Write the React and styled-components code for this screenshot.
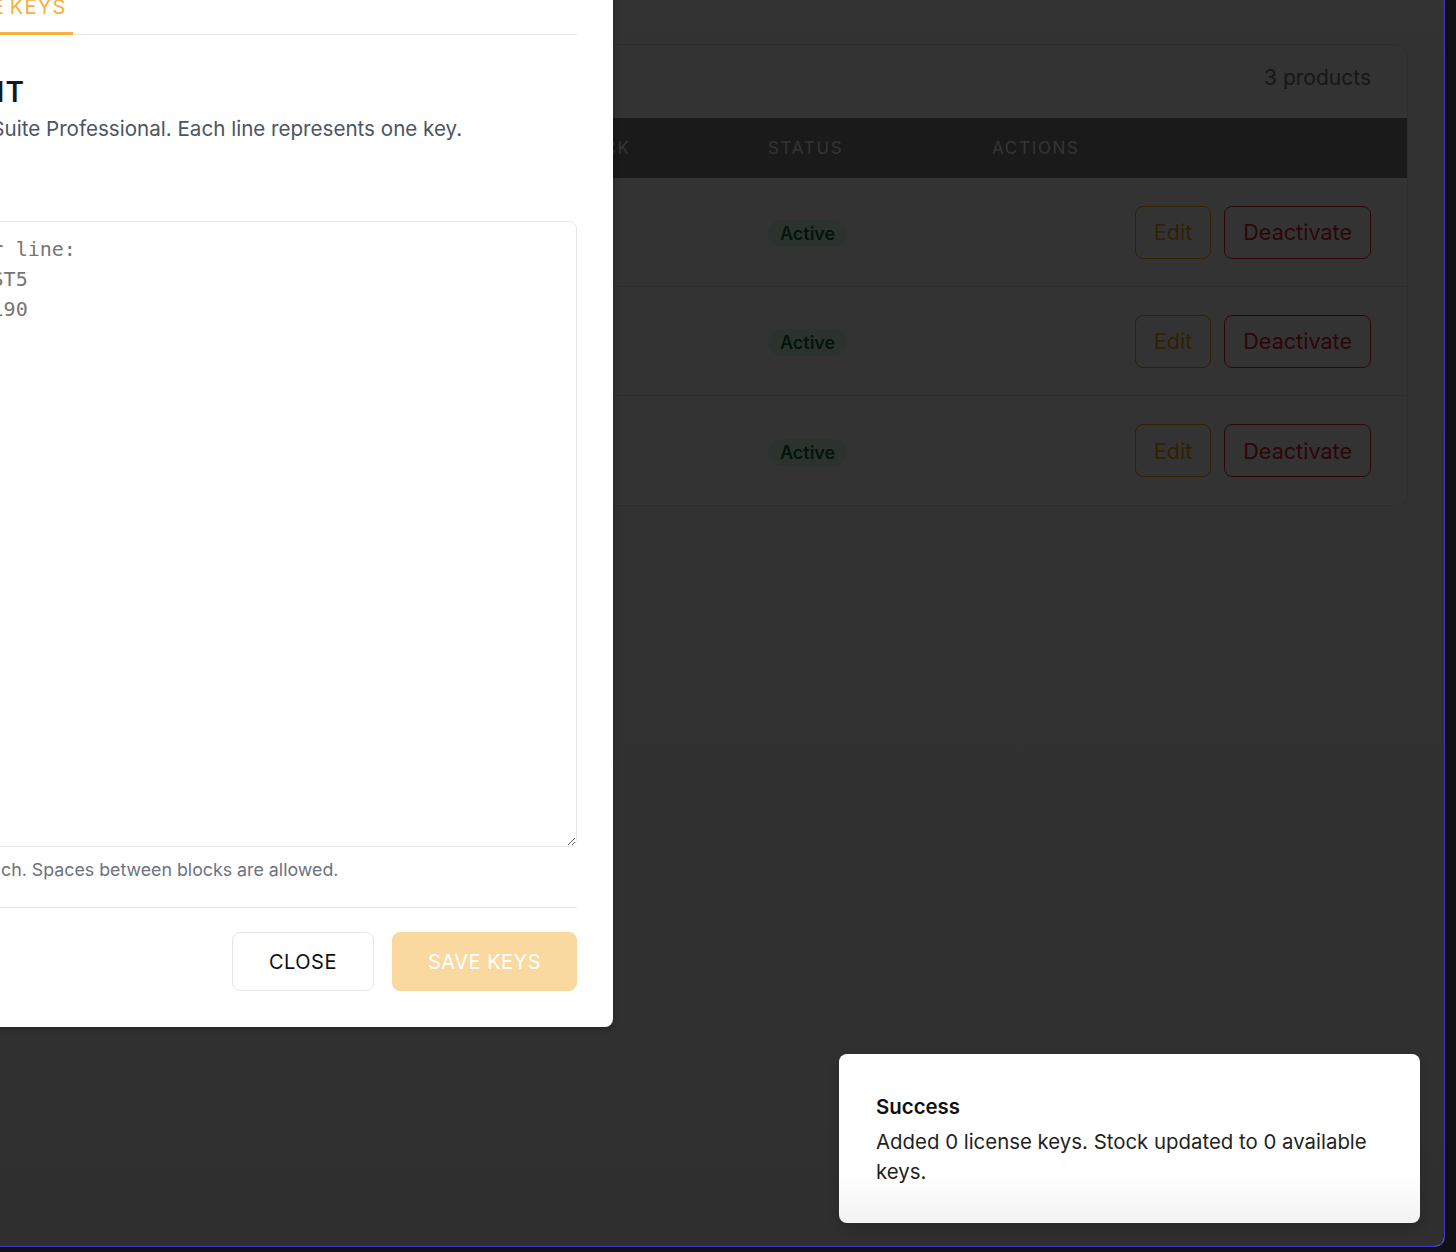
import React from 'react'
import styled, { createGlobalStyle } from 'styled-components'

const GlobalStyle = createGlobalStyle`
    html, body {
        margin: 0;
        padding: 0;
        background: #0f1014;
    }
    body {
        font-family: Inter, "Noto Sans", sans-serif;
        color: #111827;
    }
    * {
        box-sizing: border-box;
    }
`

const Window = styled.div`
    position: relative;
    width: 1445px;
    height: 1247px;
    border-right: 1px solid #4338ca;
    border-bottom: 1px solid #4338ca;
    border-bottom-right-radius: 10px;
    overflow: hidden;
    background: linear-gradient(180deg, #fcfcfc 0%, #ebebeb 100%);
`

const Page = styled.main`
    padding: 44px 36px 0 36px;
`

const Card = styled.section`
    background: #ffffff;
    border: 1px solid #e5e7eb;
    border-radius: 12px;
    overflow: hidden;
`

const CardHeader = styled.div`
    display: flex;
    justify-content: space-between;
    align-items: center;
    padding: 19px 36px 26px;
    line-height: 28px;
`

const CardTitle = styled.h2`
    margin: 0;
    font-size: 24px;
    font-weight: 600;
`

const Count = styled.span`
    font-size: 21px;
    color: #6b7280;
`

const Row = styled.div`
    display: grid;
    grid-template-columns: 291px 200px 204px 224px 1fr;
    align-items: center;
    height: ${p => p.$head ? '60px' : '109px'};
    background: ${p => p.$head ? '#808080' : 'transparent'};
    border-bottom: ${p => p.$last || p.$head ? 'none' : '1px solid #e5e7eb'};
`

const HeadCell = styled.div`
    padding: 0 36px;
    font-size: 17px;
    letter-spacing: 1.7px;
    text-transform: uppercase;
    color: #ffffff;
`

const Cell = styled.div`
    padding: 0 36px;
    font-size: 18px;
    display: flex;
    justify-content: ${p => p.$end ? 'flex-end' : 'flex-start'};
    gap: 13px;
`

const Badge = styled.span`
    display: inline-flex;
    align-items: center;
    height: 27px;
    margin-top: 3px;
    padding: 0 12px;
    border-radius: 14px;
    background: #dcfce7;
    color: #166534;
    font-size: 18px;
    font-weight: 600;
`

const RowButton = styled.button`
    height: 53px;
    padding: 0 18px;
    border-radius: 8px;
    background: transparent;
    font-family: inherit;
    font-size: 21.6px;
    border: 1px solid ${p => p.$danger ? '#dc2626' : '#f59e0b'};
    color: ${p => p.$danger ? '#dc2626' : '#f59e0b'};
`

const Backdrop = styled.div`
    position: absolute;
    inset: 0;
    background: rgba(0, 0, 0, 0.8);
`

const Modal = styled.div`
    position: absolute;
    left: -230px;
    top: -38px;
    width: 843px;
    padding: 24px 36px 36px;
    background: #ffffff;
    border-radius: 8px;
    box-shadow: 0 2px 6px rgba(0, 0, 0, 0.25);
`

const Tabs = styled.div`
    display: flex;
    border-bottom: 1px solid #e5e7eb;
`

const Tab = styled.div`
    position: relative;
    height: 48px;
    padding: 0 6px 6px;
    display: flex;
    align-items: center;
    font-size: 20px;
    letter-spacing: 1.2px;
    word-spacing: -2px;
    text-transform: uppercase;
    color: ${p => p.$active ? '#f5b041' : '#6b7280'};

    &::after {
        content: '';
        display: ${p => p.$active ? 'block' : 'none'};
        position: absolute;
        left: 0;
        right: 0;
        bottom: -1px;
        height: 3px;
        background: #f5b041;
    }
`

const Heading = styled.h3`
    margin: 39px 0 0;
    font-size: 28px;
    line-height: 36px;
    font-weight: 600;
    letter-spacing: 1.2px;
    text-transform: uppercase;
    color: #111827;
`

const Description = styled.p`
    margin: 4px 0 0;
    font-size: 20.6px;
    line-height: 30px;
    color: #4b5563;
`

const KeysInput = styled.textarea`
    display: block;
    width: 100%;
    height: 626px;
    margin-top: 77px;
    padding: 12px 16px;
    border: 1px solid #e5e7eb;
    border-radius: 8px;
    font-family: "DejaVu Sans Mono", "Liberation Mono", monospace;
    font-size: 20px;
    line-height: 30px;
    color: #1f2937;
    outline: none;

    &::placeholder {
        color: #757575;
    }
`

const Hint = styled.p`
    margin: 11px 0 0;
    padding-bottom: 25px;
    font-size: 17.8px;
    line-height: 24px;
    color: #6b7280;
    border-bottom: 1px solid #e5e7eb;
`

const Footer = styled.div`
    display: flex;
    justify-content: flex-end;
    gap: 18px;
    padding-top: 24px;
`

const Button = styled.button`
    height: 59px;
    padding: 0 ${p => p.$primary ? '35px' : '36px'};
    border-radius: 8px;
    font-family: inherit;
    font-size: 20px;
    letter-spacing: 0.5px;
    text-transform: uppercase;
    border: 1px solid ${p => p.$primary ? '#f9d9a0' : '#e5e7eb'};
    background: ${p => p.$primary ? '#f9d9a0' : '#ffffff'};
    color: ${p => p.$primary ? '#ffffff' : '#111111'};
`

const Toast = styled.div`
    position: absolute;
    right: 24px;
    bottom: 23px;
    width: 581px;
    padding: 38px 37px 36px;
    border-radius: 8px;
    background: linear-gradient(180deg, #ffffff 70%, #f3f3f3 100%);
    box-shadow: 0 4px 12px rgba(0, 0, 0, 0.15);
`

const ToastTitle = styled.div`
    font-size: 20.4px;
    line-height: 30px;
    font-weight: 600;
    color: #111111;
`

const ToastText = styled.div`
    margin-top: 5px;
    font-size: 20.4px;
    line-height: 30px;
    color: #1f1f1f;
`

const products = [
    { name: 'Office Suite Professional', price: '$249.00', stock: 0 },
    { name: 'Antivirus Premium', price: '$59.00', stock: 12 },
    { name: 'Design Studio Pro', price: '$399.00', stock: 4 },
]

const placeholder = 'Add one key per line:\nABCDE-12345-FGST5\n12345-ABCDE-67190'

export default function App() {
    return (
        <Window>
            <GlobalStyle />
            <Page>
                <Card>
                    <CardHeader>
                        <CardTitle>Products</CardTitle>
                        <Count>3 products</Count>
                    </CardHeader>
                    <Row $head>
                        <HeadCell>Product</HeadCell>
                        <HeadCell>Price</HeadCell>
                        <HeadCell>Stock</HeadCell>
                        <HeadCell>Status</HeadCell>
                        <HeadCell>Actions</HeadCell>
                    </Row>
                    {products.map((p, idx) => (
                        <Row key={p.name} $last={idx === products.length - 1}>
                            <Cell>{p.name}</Cell>
                            <Cell>{p.price}</Cell>
                            <Cell>{p.stock}</Cell>
                            <Cell><Badge>Active</Badge></Cell>
                            <Cell $end>
                                <RowButton>Edit</RowButton>
                                <RowButton $danger>Deactivate</RowButton>
                            </Cell>
                        </Row>
                    ))}
                </Card>
            </Page>

            <Backdrop />

            <Modal>
                <Tabs>
                    <Tab>Details</Tab>
                    <Tab $active>License Keys</Tab>
                </Tabs>
                <Heading>Management</Heading>
                <Description>Add keys to Office Suite Professional. Each line represents one key.</Description>
                <KeysInput placeholder={placeholder} />
                <Hint>Sets of 5 characters each. Spaces between blocks are allowed.</Hint>
                <Footer>
                    <Button>Close</Button>
                    <Button $primary disabled>Save Keys</Button>
                </Footer>
            </Modal>

            <Toast>
                <ToastTitle>Success</ToastTitle>
                <ToastText>Added 0 license keys. Stock updated to 0 available keys.</ToastText>
            </Toast>
        </Window>
    )
}
